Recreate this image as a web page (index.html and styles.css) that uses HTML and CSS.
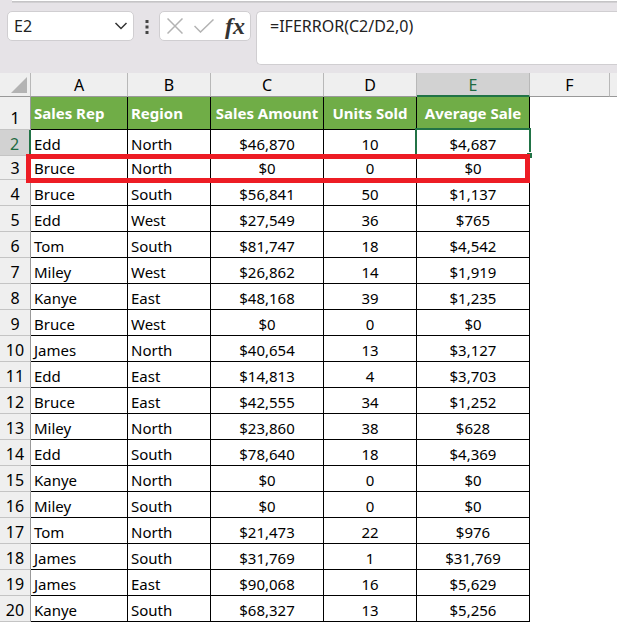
FILE: index.html
```html
<!DOCTYPE html>
<html lang="en">

<head>
    <meta charset="UTF-8" />
    <meta name="viewport" content="width=device-width, initial-scale=1.0" />
    <title>Average Sale</title>
    <link rel="stylesheet" href="styles.css">
</head>

<body>
    <div class="ribbon-edge"></div>

    <div class="formula-bar">
        <div class="name-box">
            <input type="text" class="name-input" value="E2" aria-label="Name Box">
            <button type="button" class="icon-btn" aria-label="Open name list">
                <svg width="14" height="8" viewBox="0 0 14 8"><path d="M1.5 1 L7 6.5 L12.5 1" fill="none" stroke="#333" stroke-width="1.5" /></svg>
            </button>
        </div>
        <svg class="dots" width="4" height="14" viewBox="0 0 4 14"><path d="M0.5 0h3v3h-3z M0.5 5.5h3v3h-3z M0.5 11h3v3h-3z" fill="#444" /></svg>
        <div class="actions">
            <button type="button" class="icon-btn" aria-label="Cancel">
                <svg width="16" height="16" viewBox="0 0 16 16"><path d="M0.5 0.5 L15.5 15.5 M15.5 0.5 L0.5 15.5" fill="none" stroke="#b3b3b3" stroke-width="1.5" /></svg>
            </button>
            <button type="button" class="icon-btn" aria-label="Enter">
                <svg width="20" height="14" viewBox="0 0 20 14"><path d="M0.5 7 L6.5 13 L19.5 0.5" fill="none" stroke="#b3b3b3" stroke-width="1.5" /></svg>
            </button>
            <button type="button" class="icon-btn fx" aria-label="Insert Function">fx</button>
        </div>
        <textarea class="formula" aria-label="Formula" spellcheck="false">=IFERROR(C2/D2,0)</textarea>
    </div>

    <table class="sheet">
        <colgroup>
            <col class="col-num">
            <col class="col-a">
            <col class="col-b">
            <col class="col-c">
            <col class="col-d">
            <col class="col-e">
            <col class="col-f">
            <col>
        </colgroup>
        <thead>
            <tr>
                <th class="corner"><svg width="16" height="16" viewBox="0 0 16 16"><path d="M16 0 V16 H0 Z" fill="#b3b3b3" /></svg></th>
                <th>A</th>
                <th>B</th>
                <th>C</th>
                <th>D</th>
                <th class="active">E</th>
                <th>F</th>
                <th></th>
            </tr>
        </thead>
        <tbody>
            <tr class="titles"><th>1</th><td>Sales Rep</td><td>Region</td><td>Sales Amount</td><td>Units Sold</td><td>Average Sale</td></tr>
            <tr><th class="active">2</th><td>Edd</td><td>North</td><td>$46,870</td><td>10</td><td class="selected">$4,687</td></tr>
            <tr class="short"><th>3<span class="highlight"></span></th><td>Bruce</td><td>North</td><td>$0</td><td>0</td><td>$0</td></tr>
            <tr><th>4</th><td>Bruce</td><td>South</td><td>$56,841</td><td>50</td><td>$1,137</td></tr>
            <tr><th>5</th><td>Edd</td><td>West</td><td>$27,549</td><td>36</td><td>$765</td></tr>
            <tr><th>6</th><td>Tom</td><td>South</td><td>$81,747</td><td>18</td><td>$4,542</td></tr>
            <tr><th>7</th><td>Miley</td><td>West</td><td>$26,862</td><td>14</td><td>$1,919</td></tr>
            <tr><th>8</th><td>Kanye</td><td>East</td><td>$48,168</td><td>39</td><td>$1,235</td></tr>
            <tr><th>9</th><td>Bruce</td><td>West</td><td>$0</td><td>0</td><td>$0</td></tr>
            <tr><th>10</th><td>James</td><td>North</td><td>$40,654</td><td>13</td><td>$3,127</td></tr>
            <tr><th>11</th><td>Edd</td><td>East</td><td>$14,813</td><td>4</td><td>$3,703</td></tr>
            <tr><th>12</th><td>Bruce</td><td>East</td><td>$42,555</td><td>34</td><td>$1,252</td></tr>
            <tr><th>13</th><td>Miley</td><td>North</td><td>$23,860</td><td>38</td><td>$628</td></tr>
            <tr><th>14</th><td>Edd</td><td>South</td><td>$78,640</td><td>18</td><td>$4,369</td></tr>
            <tr><th>15</th><td>Kanye</td><td>North</td><td>$0</td><td>0</td><td>$0</td></tr>
            <tr><th>16</th><td>Miley</td><td>South</td><td>$0</td><td>0</td><td>$0</td></tr>
            <tr><th>17</th><td>Tom</td><td>North</td><td>$21,473</td><td>22</td><td>$976</td></tr>
            <tr><th>18</th><td>James</td><td>South</td><td>$31,769</td><td>1</td><td>$31,769</td></tr>
            <tr><th>19</th><td>James</td><td>East</td><td>$90,068</td><td>16</td><td>$5,629</td></tr>
            <tr><th>20</th><td>Kanye</td><td>South</td><td>$68,327</td><td>13</td><td>$5,256</td></tr>
        </tbody>
    </table>
</body>

</html>
```

FILE: styles.css
```css
* {
    box-sizing: border-box;
}

body {
    margin: 0;
    background-color: #fff;
    color: #000;
    font-family: "Noto Sans", "Open Sans", sans-serif;
    font-size: 15px;
}

.ribbon-edge {
    height: 3px;
    background: linear-gradient(#fff 1px, #bfbec0 1px, #d8d6d9);
    border-left: 12px solid #e6e3e7;
}

/* Formula bar */
.formula-bar {
    display: flex;
    align-items: flex-start;
    height: 70px;
    padding: 8px 0 0 7px;
    background-color: #e6e3e7;
    overflow: hidden;
}

.name-box,
.actions {
    display: flex;
    align-items: center;
    height: 30px;
    background-color: #fff;
    border: 1px solid #d0ced1;
    border-radius: 5px;
}

.name-box {
    width: 127px;
    padding-right: 5px;
}

.name-input {
    flex: 1;
    min-width: 0;
    padding: 0 0 0 6px;
    border: none;
    outline: none;
    background: none;
    color: #222;
    font: inherit;
    font-size: 16px;
}

.icon-btn {
    display: flex;
    padding: 0;
    border: none;
    background: none;
    cursor: pointer;
}

.dots {
    margin: 9px 10px 0 11px;
}

.actions {
    width: 92px;
    padding: 0 5px 0 7px;
    justify-content: space-between;
}

.fx {
    color: #333;
    font-family: "Liberation Serif", serif;
    font-size: 24px;
    font-style: italic;
    font-weight: bold;
    line-height: 24px;
}

.formula {
    flex: 1;
    height: 54px;
    margin-left: 5px;
    padding: 4px 13px;
    border: 1px solid #d0ced1;
    border-right: none;
    border-radius: 5px 0 0 5px;
    outline: none;
    resize: none;
    background-color: #fff;
    color: #222;
    font: inherit;
    font-size: 16px;
    line-height: 20px;
}

/* Sheet */
.sheet {
    width: 100%;
    table-layout: fixed;
    border-collapse: separate;
    border-spacing: 0;
    line-height: 20px;
}

.col-num { width: 31px; }
.col-a { width: 97px; }
.col-b { width: 83px; }
.col-c { width: 113px; }
.col-d { width: 93px; }
.col-e { width: 113px; }
.col-f { width: 80px; }

th {
    padding: 0;
    background-color: #efefef;
    border-right: 1px solid #b8b8b8;
    font-size: 16px;
    font-weight: normal;
    text-align: center;
}

thead th {
    height: 24px;
    padding-top: 1px;
    border-bottom: 1px solid #999;
}

thead .active {
    border-bottom: 2px solid #217346;
}

thead th:last-child {
    border-right: none;
}

thead .corner {
    padding: 0 3px 3px 0;
    text-align: right;
    vertical-align: bottom;
}

.corner svg {
    display: block;
    margin-left: auto;
}

tbody th {
    position: relative;
    padding: 3px 0 0;
    border-right-color: #999;
    border-bottom: 1px solid #c4c4c4;
}

.active {
    background-color: #d2d2d2;
    color: #1e6b41;
}

tbody .active {
    border-right: 2px solid #217346;
}

td {
    height: 26px;
    padding: 3px 0 0;
    border-right: 1px solid #000;
    border-bottom: 1px solid #000;
    text-align: center;
    white-space: nowrap;
}

td:nth-child(2),
td:nth-child(3) {
    padding-left: 3px;
    text-align: left;
}

.short td {
    height: 24px;
}

.short th,
.short td {
    padding-top: 0;
}

.titles th {
    padding-top: 10px;
}

.titles td {
    height: 33px;
    padding-top: 0;
    background-color: #70ad47;
    color: #fff;
    font-weight: bold;
}

/* Active cell frame with its fill handle */
.selected {
    position: relative;
}

.selected::before {
    content: "";
    position: absolute;
    inset: -2px -2px -1px -2px;
    border: 2px solid #217346;
}

.selected::after {
    content: "";
    position: absolute;
    right: -3px;
    bottom: -3px;
    width: 5px;
    height: 5px;
    background-color: #217346;
    border-top: 1px solid #fff;
}

.highlight {
    position: absolute;
    z-index: 1;
    top: -2px;
    left: 26px;
    width: 504px;
    height: 29px;
    border: 5px solid #ed1c24;
}
```
